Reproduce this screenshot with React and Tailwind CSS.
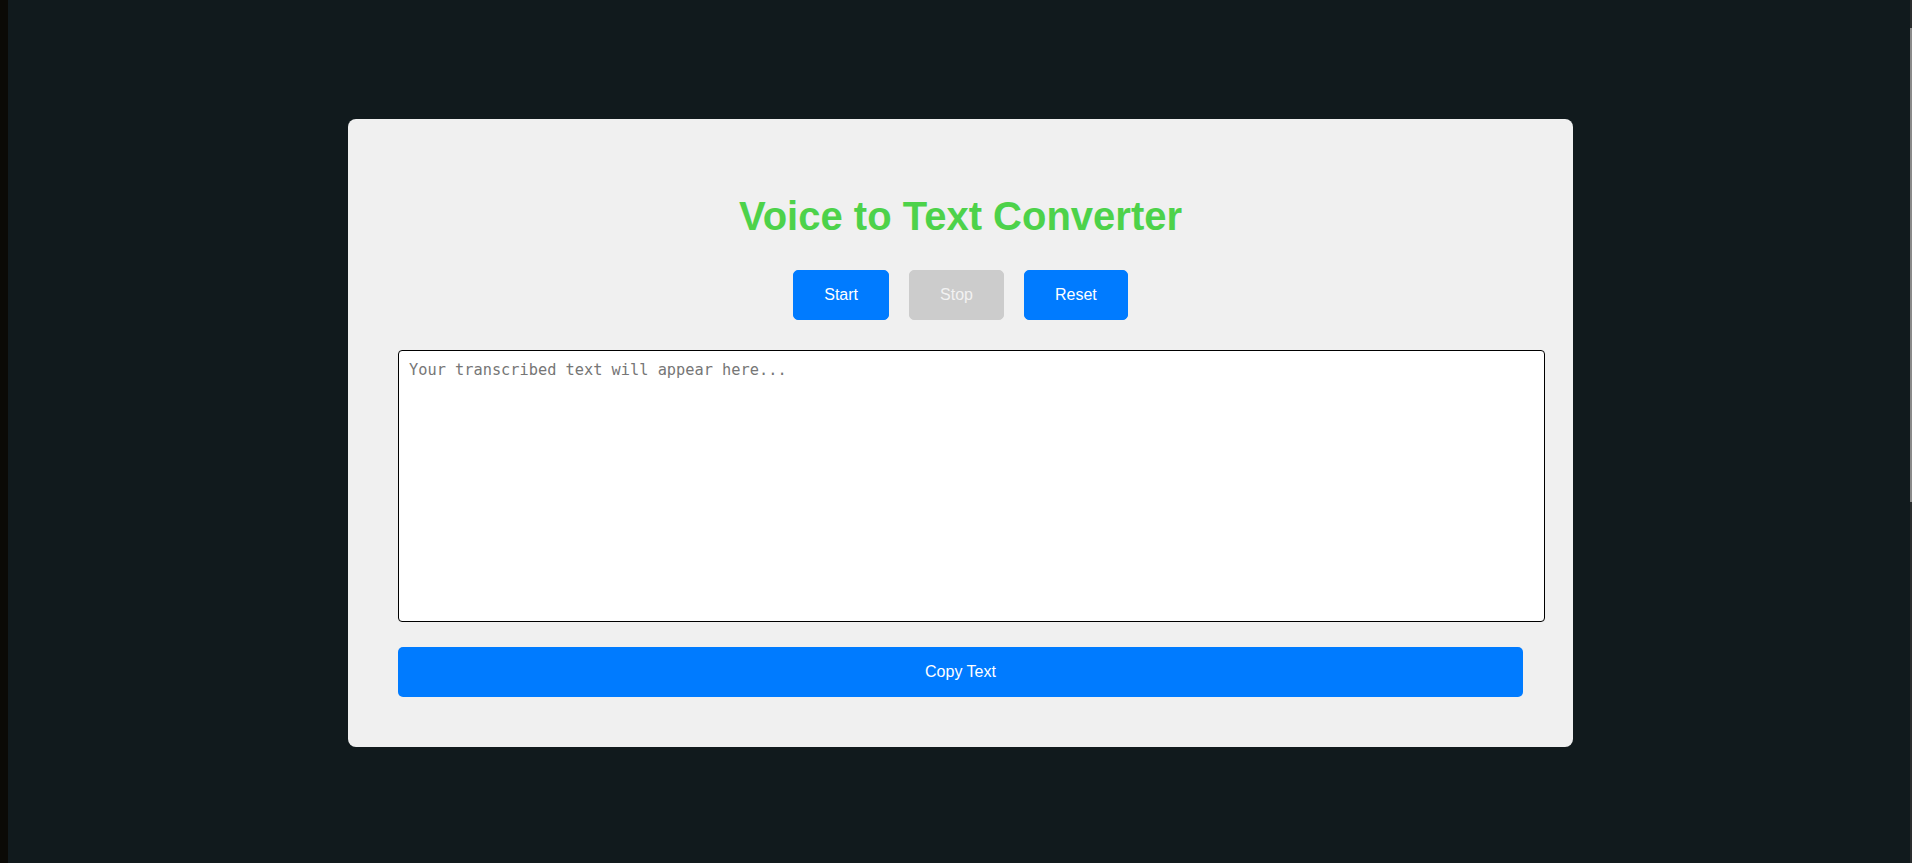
import React from "react";

export default function App() {
  return (
    <div className="flex w-full min-h-[863px] h-[863px] bg-[#111a1d] overflow-hidden" style={{ fontFamily: '"Liberation Sans", Arial, sans-serif' }}>
      <div className="w-[8px] shrink-0 bg-[#0b0a06]" />
      <div className="flex-1 pl-[340px] pt-[119px]">
        <div className="w-[1225px] h-[628px] rounded-[8px] bg-[#f0f0f0] p-[50px] flex flex-col">
          <h1 className="mt-[25px] text-center text-[40px] leading-[45px] font-bold text-[#4dd24a]">
            Voice to Text Converter
          </h1>
          <div className="mt-[31px] flex justify-center gap-[20px]">
            <button className="h-[50px] px-[30px] border border-[#007bff] bg-[#007bff] rounded-[5px] text-[16px] text-white">
              Start
            </button>
            <button disabled className="h-[50px] px-[30px] border border-[#cccccc] bg-[#cccccc] rounded-[5px] text-[16px] text-[#f2f2f2]">
              Stop
            </button>
            <button className="h-[50px] px-[30px] border border-[#007bff] bg-[#007bff] rounded-[5px] text-[16px] text-white">
              Reset
            </button>
          </div>
          <textarea
            className="block mt-[30px] w-[1147px] h-[272px] shrink-0 resize-none border border-black rounded-[4px] bg-white p-[10px] text-[15.3px] leading-[19px] text-black placeholder:text-[#767676] outline-none"
            style={{ fontFamily: '"DejaVu Sans Mono", "Liberation Mono", monospace' }}
            placeholder="Your transcribed text will appear here..."
          />
          <button className="mt-[25px] w-full h-[50px] shrink-0 rounded-[5px] bg-[#007bff] text-[16px] text-white">
            Copy Text
          </button>
        </div>
      </div>
      <div className="w-[2px] shrink-0 bg-[#2a2d2e] flex flex-col">
        <div className="mt-[28px] h-[474px] bg-[#8a8a8a]" />
      </div>
    </div>
  );
}
